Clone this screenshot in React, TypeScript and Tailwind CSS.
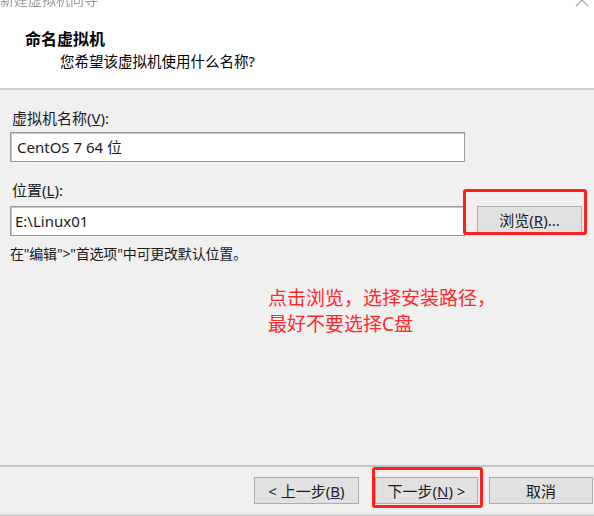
import React from "react";

const font = { fontFamily: '"Noto Sans", "Noto Sans CJK SC", sans-serif' };

function Btn({ children, className = "" }: { children: React.ReactNode; className?: string }) {
  return (
    <div
      className={`h-[27px] flex items-center justify-center bg-[#e1e1e1] border border-[#adadad] text-[15px] leading-[18px] text-[#1a1a1a] ${className}`}
    >
      {children}
    </div>
  );
}

export default function App() {
  return (
    <div className="w-[594px] h-[516px] flex flex-col bg-[#f0f0f0] overflow-hidden text-[#1a1a1a]" style={font}>
      {/* header */}
      <div className="h-[88px] bg-white relative flex flex-col">
        <div className="-mt-[9px] ml-0 text-[14px] leading-[18px] text-[#9a9a9a] blur-[0.4px]">新建虚拟机向导</div>
        <svg className="absolute right-[4px] -top-[2px]" width="16" height="9" viewBox="0 0 16 9">
          <path d="M2 8 L8 2 L14 8" fill="none" stroke="#a8a8a8" strokeWidth="1.2" />
        </svg>
        <div className="mt-[20px] ml-[25px] text-[16px] leading-[20px] font-bold text-black">命名虚拟机</div>
        <div className="mt-[2px] ml-[60px] text-[14.5px] leading-[20px] text-black">您希望该虚拟机使用什么名称?</div>
      </div>
      <div className="h-[2px] bg-[#cdcdcd]" />

      {/* body */}
      <div className="flex-1 flex flex-col pl-[10px] relative">
        <div className="mt-[19px] ml-[2px] text-[15px] leading-[18px]">
          虚拟机名称(<span className="underline text-[#202040]">V</span>):
        </div>
        <div className="mt-[5px] w-[455px] h-[30px] bg-white border border-[#9a9a9a] shadow-[inset_1px_1px_0_#c8c8c8] flex items-center pl-[6px] text-[15px]">
          CentOS 7 64 位
        </div>
        <div className="mt-[19px] ml-[2px] text-[15px] leading-[18px]">
          位置(<span className="underline text-[#202040]">L</span>):
        </div>
        <div className="mt-[7px] flex items-start">
          <div className="w-[455px] h-[30px] bg-white border border-[#9a9a9a] shadow-[inset_1px_1px_0_#c8c8c8] flex items-center pl-[4px] text-[15px]">
            E:\Linux01
          </div>
          <div className="relative ml-[12px] mt-[0px]">
            <Btn className="w-[105px] h-[27px]">
              浏览(<span className="underline text-[#202040]">R</span>)...
            </Btn>
            <div className="absolute -left-[14px] -top-[17px] -right-[5px] -bottom-[2px] border-[3px] border-[#ff1f1f] rounded-[3px]" />
          </div>
        </div>
        <div className="mt-[9px] ml-[0px] text-[14px] leading-[18px] tracking-[-0.2px]">在"编辑"&gt;"首选项"中可更改默认位置。</div>
        <div className="mt-[22px] ml-[258px] text-[19px] leading-[26px] text-[#ff2a2a]">
          <div>点击浏览，选择安装路径，</div>
          <div>最好不要选择C盘</div>
        </div>
      </div>

      <div className="h-[2px] bg-[#c4c4c4]" />
      {/* footer */}
      <div className="h-[47px] flex items-start pt-[10px] pl-[254px]">
        <Btn className="w-[105px]">
          &lt; 上一步(<span className="underline text-[#202040]">B</span>)
        </Btn>
        <div className="relative ml-[16px]">
          <Btn className="w-[103px]">
            下一步(<span className="underline text-[#202040]">N</span>) &gt;
          </Btn>
          <div className="absolute -left-[3px] -top-[10px] -right-[5px] -bottom-[4px] border-[3px] border-[#ff1f1f] rounded-[3px]" />
        </div>
        <Btn className="w-[104px] ml-[11px]">取消</Btn>
      </div>
      <div className="h-[2px] bg-[#d4d4d4]" />
    </div>
  );
}
